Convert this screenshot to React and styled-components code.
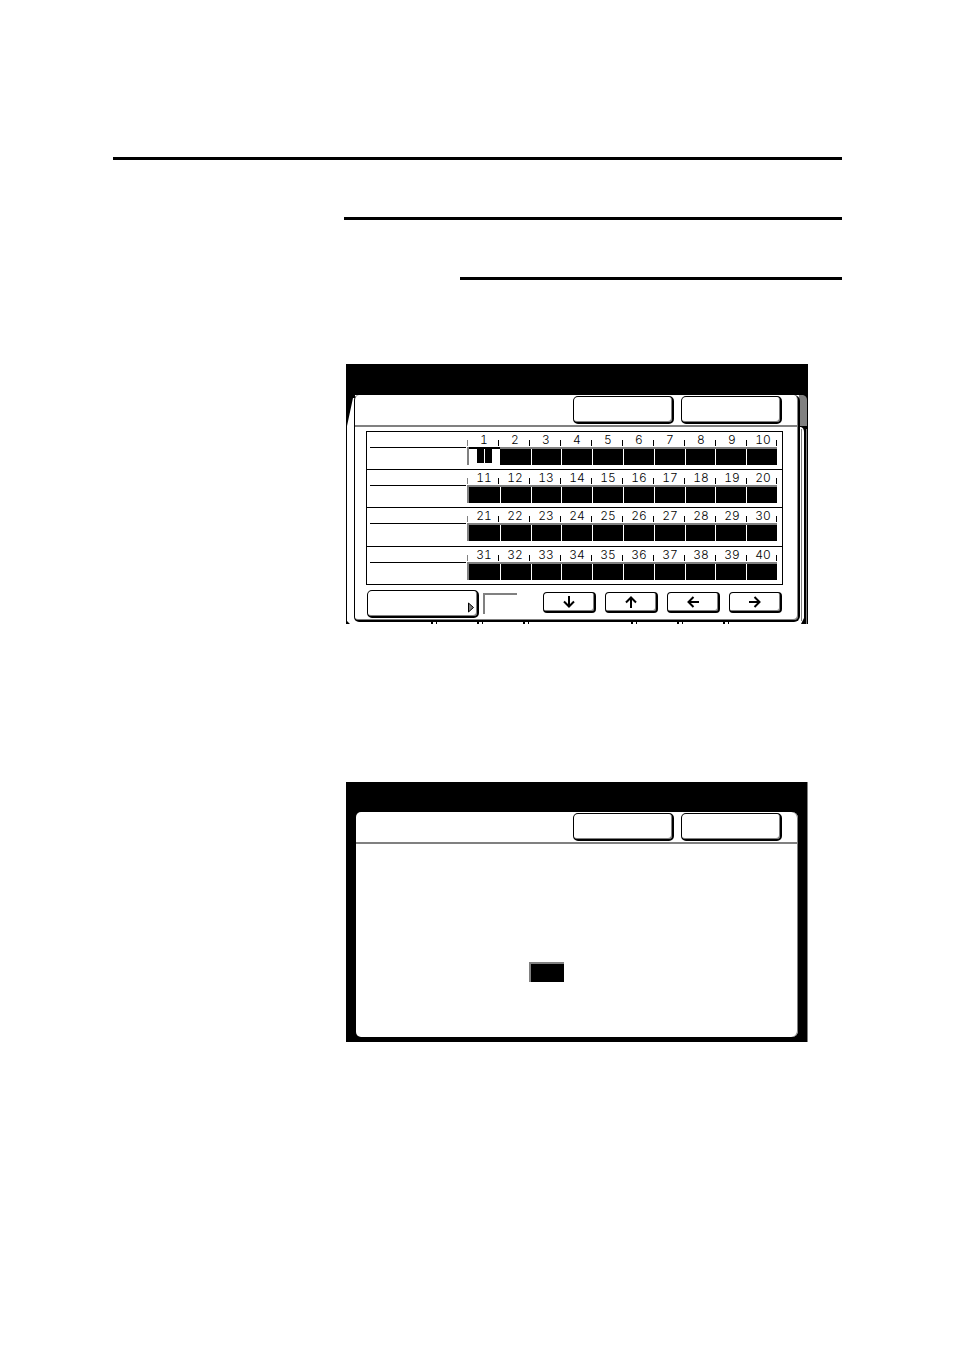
import React from "react";
import styled, { createGlobalStyle } from "styled-components";

const GlobalStyle = createGlobalStyle`
  * {
    box-sizing: border-box;
  }

  body {
    margin: 0;
    background: #fff;
    color: #000;
    font-family: Inter, "Liberation Sans", sans-serif;
  }
`;

const Page = styled.main`
  padding: 157px 112px 309px 113px;
`;

const Rule = styled.hr`
  height: 3px;
  margin: 0 0 57px ${props => props.$indent}px;
  border: 0;
  background: #000;
`;

const Screens = styled.div`
  display: flex;
  flex-direction: column;
  gap: 158px;
  margin: 84px 34px 0 233px;
`;

const Screen = styled.section`
  position: relative;
  display: flex;
  flex-direction: column;
  padding: ${props => (props.$solid ? "30px 9px 5px 10px" : "31px 8px 2px 8px")};
  background: ${props =>
    props.$solid ? "#000" : "linear-gradient(#000 31px, #fff 31px)"};
  border-right: ${props => (props.$solid ? "1px solid #808080" : "0")};
`;

const Backdrop = styled.svg`
  position: absolute;
  top: 31px;
  width: 9px;
  height: 229px;
  ${props => props.$side}: 0;
`;

const Stubs = styled.div`
  position: absolute;
  bottom: 0;
  left: ${props => props.$left}px;
  display: flex;
  gap: ${props => props.$gap}px;
`;

const Stub = styled.i`
  width: 6px;
  height: 2px;
  border: solid #000;
  border-width: 0 1px 0 2px;
`;

const Panel = styled.div`
  position: relative;
  background: #fff;
  border: solid #000;
  border-width: 0 2px 2px 1px;
  border-radius: 5px 6px 6px 5px;
  box-shadow: inset -1px -1px 0 #808080;
`;

const PlainPanel = styled(Panel)`
  min-height: 225px;
  border: 0;
  box-shadow: inset -1px 0 0 #808080;
`;

const Header = styled.header`
  display: flex;
  justify-content: flex-end;
  gap: 7px;
  height: 32px;
  padding: 1px 16px 0 0;
  border-bottom: 2px solid #808080;
`;

const Key = styled.button`
  width: 101px;
  height: 28px;
  padding: 0;
  background: #fff;
  border: solid #000;
  border-width: 1px 2px 2px 1px;
  border-radius: 5px;
  box-shadow: inset -1px -1px 0 #808080;
`;

const Chart = styled.div`
  margin: 4px 15px 0 11px;
  border: solid #000;
  border-width: 1px 1px 0;
`;

const ChartRow = styled.div`
  display: grid;
  grid-template-columns: 96px 1fr;
  column-gap: 1px;
  height: ${props => props.$height}px;
  padding: 0 5px 0 3px;
  border-bottom: 1px solid #000;
`;

const RowLabel = styled.div`
  height: 16px;
  border-bottom: 1px solid #000;
`;

const Scale = styled.div`
  display: grid;
  grid-template-columns: repeat(10, 1fr);
  height: 15px;
  background: linear-gradient(#000, #000) 100% 8px / 1px 6px no-repeat;
`;

const Mark = styled.span`
  padding-left: 3px;
  text-align: center;
  font-size: 12px;
  font-weight: 300;
  font-variant-numeric: tabular-nums;
  line-height: 15px;
  background: linear-gradient(#000, #000) 0 8px / 1px 6px no-repeat;

  &:first-child {
    background-image: linear-gradient(#808080, #808080);
  }
`;

const Strip = styled.div`
  display: grid;
  grid-template-columns: repeat(10, 1fr);
  height: 18px;
  border: solid #808080;
  border-width: 2px 0 0 2px;
`;

const Cell = styled.button`
  padding: 0;
  background: #000;
  border: 0;
  border-left: 1px solid #fff;

  &:first-child {
    border-left: 0;
  }
`;

const OpenCell = styled(Cell)`
  display: flex;
  justify-content: center;
  gap: 1px;
  background: #fff;
  box-shadow: 0 -2px 0 #000;

  & + ${Cell} {
    border-left: 0;
  }
`;

const Cursor = styled.i`
  width: 7px;
  height: 14px;
  background: #000;
`;

const Footer = styled.footer`
  display: flex;
  align-items: flex-start;
  padding: 5px 16px 2px 12px;
`;

const MenuKey = styled(Key)`
  display: flex;
  align-items: flex-end;
  justify-content: flex-end;
  width: 112px;
  padding: 0 2px 3px 0;
`;

const Readout = styled.output`
  width: 34px;
  height: 21px;
  margin: 3px auto 0 4px;
  border: solid #808080;
  border-width: 2px 0 0 2px;
`;

const ArrowKeys = styled.div`
  display: flex;
  gap: 9px;
  padding-top: 2px;
`;

const ArrowKey = styled(Key)`
  display: flex;
  align-items: center;
  justify-content: center;
  width: 53px;
  height: 21px;
  border-radius: 4px;
`;

const ValueBox = styled.output`
  display: block;
  width: 35px;
  height: 20px;
  margin: 118px auto 0 173px;
  background: #000;
  border: solid #808080;
  border-width: 2px 0 0 2px;
`;

const rows = [
  { start: 1, height: 38 },
  { start: 11, height: 38 },
  { start: 21, height: 39 },
  { start: 31, height: 38 }
];

const arrows = [
  { name: "Down", turn: 180 },
  { name: "Up", turn: 0 },
  { name: "Left", turn: 270 },
  { name: "Right", turn: 90 }
];

const Arrow = ({ turn }) => (
  <svg width="12" height="12" viewBox="0 0 12 12" aria-hidden="true">
    <path
      d="M6 12V2M1 6.5L6 1.5L11 6.5"
      fill="none"
      stroke="#000"
      strokeWidth="2"
      transform={`rotate(${turn} 6 6)`}
    />
  </svg>
);

const KeyRow = () => (
  <Header>
    <Key type="button" aria-label="Cancel" />
    <Key type="button" aria-label="OK" />
  </Header>
);

const PositionRow = ({ start, height }) => {
  const numbers = Array.from({ length: 10 }, (_, i) => start + i);
  return (
    <ChartRow $height={height}>
      <RowLabel />
      <div>
        <Scale>
          {numbers.map(number => (
            <Mark key={number}>{number}</Mark>
          ))}
        </Scale>
        <Strip>
          {numbers.map(number =>
            number === 1 ? (
              <OpenCell key={number} type="button" aria-label="Position 1">
                <Cursor />
                <Cursor />
              </OpenCell>
            ) : (
              <Cell
                key={number}
                type="button"
                aria-label={`Position ${number}`}
              />
            )
          )}
        </Strip>
      </div>
    </ChartRow>
  );
};

const App = () => (
  <>
    <GlobalStyle />
    <Page>
      <Rule $indent={0} />
      <Rule $indent={231} />
      <Rule $indent={347} />
      <Screens>
        <Screen>
          <Backdrop $side="left" viewBox="0 0 9 229" aria-hidden="true">
            <path d="M0 0H9V3H7L1 31V226L4 229H0Z" />
          </Backdrop>
          <Backdrop $side="right" viewBox="0 0 9 229" aria-hidden="true">
            <path d="M0 0H9V229H0Z" />
            <path d="M0 0H4Q8 1 8 5V31H0Z" fill="#808080" />
            <path d="M0 32H2Q5 33 5 37V223L2 229H0Z" fill="#fff" />
            <path d="M2.500 34V226M7.500 34V229" stroke="#808080" />
          </Backdrop>
          <Stubs $left={85} $gap={40}>
            <Stub />
            <Stub />
            <Stub />
          </Stubs>
          <Stubs $left={285} $gap={40}>
            <Stub />
            <Stub />
            <Stub />
          </Stubs>
          <Panel>
            <KeyRow />
            <Chart>
              {rows.map(row => (
                <PositionRow key={row.start} {...row} />
              ))}
            </Chart>
            <Footer>
              <MenuKey type="button" aria-label="Characters">
                <svg width="7" height="11" viewBox="0 0 7 11" aria-hidden="true">
                  <path
                    d="M0.500 1L5.500 5.500L0.500 10Z"
                    fill="#808080"
                    stroke="#000"
                  />
                </svg>
              </MenuKey>
              <Readout aria-label="Position" />
              <ArrowKeys>
                {arrows.map(arrow => (
                  <ArrowKey
                    key={arrow.name}
                    type="button"
                    aria-label={arrow.name}
                  >
                    <Arrow turn={arrow.turn} />
                  </ArrowKey>
                ))}
              </ArrowKeys>
            </Footer>
          </Panel>
        </Screen>
        <Screen $solid>
          <PlainPanel>
            <KeyRow />
            <ValueBox aria-label="Value" />
          </PlainPanel>
        </Screen>
      </Screens>
    </Page>
  </>
);

export default App;
